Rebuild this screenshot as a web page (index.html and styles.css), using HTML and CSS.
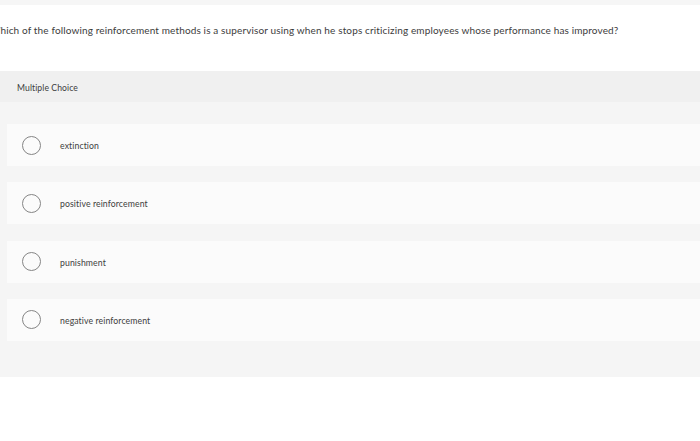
FILE: index.html
```html
<!DOCTYPE html>
<html>
<head>
<meta charset="utf-8">
<link rel="stylesheet" href="styles.css">
</head>
<body>
<div class="topbar"></div>
<div class="question">Which of the following reinforcement methods is a supervisor using when he stops criticizing employees whose performance has improved?</div>
<div class="mc-header">Multiple Choice</div>
<div class="choices">
  <div class="choice"><span class="radio"></span><span class="label">extinction</span></div>
  <div class="choice"><span class="radio"></span><span class="label">positive reinforcement</span></div>
  <div class="choice"><span class="radio"></span><span class="label">punishment</span></div>
  <div class="choice"><span class="radio"></span><span class="label">negative reinforcement</span></div>
</div>
</body>
</html>
```
FILE: styles.css
```css
html, body {
  margin: 0;
  padding: 0;
  background: #ffffff;
  overflow: hidden;
}
body {
  font-family: Lato, "Open Sans", sans-serif;
  color: #333333;
  width: 700px;
}
.topbar {
  height: 5px;
  background: #f6f6f6;
}
.question {
  margin-left: -10px;
  padding-top: 18px;
  box-sizing: border-box;
  height: 66px;
  font-size: 10px;
  letter-spacing: 0.135px;
  line-height: 14px;
  white-space: nowrap;
  color: #3c3c3c;
}
.mc-header {
  height: 31px;
  background: #f0f0f0;
  font-size: 8.6px;
  letter-spacing: 0.1px;
  line-height: 34px;
  padding-left: 17px;
  color: #3c3c3c;
}
.choices {
  background: #f5f5f5;
  padding: 22px 0 36px 7px;
  display: flex;
  flex-direction: column;
  gap: 16.3px;
}
.choice {
  height: 42px;
  background: #fbfbfb;
  display: flex;
  align-items: center;
  padding-left: 15px;
}
.radio {
  width: 17px;
  height: 17px;
  border: 1px solid #858585;
  border-radius: 50%;
  flex: none;
}
.label {
  margin-left: 19px;
  font-size: 8.7px;
  letter-spacing: 0.1px;
  line-height: 12px;
  padding-top: 2px;
  color: #404040;
}
```
